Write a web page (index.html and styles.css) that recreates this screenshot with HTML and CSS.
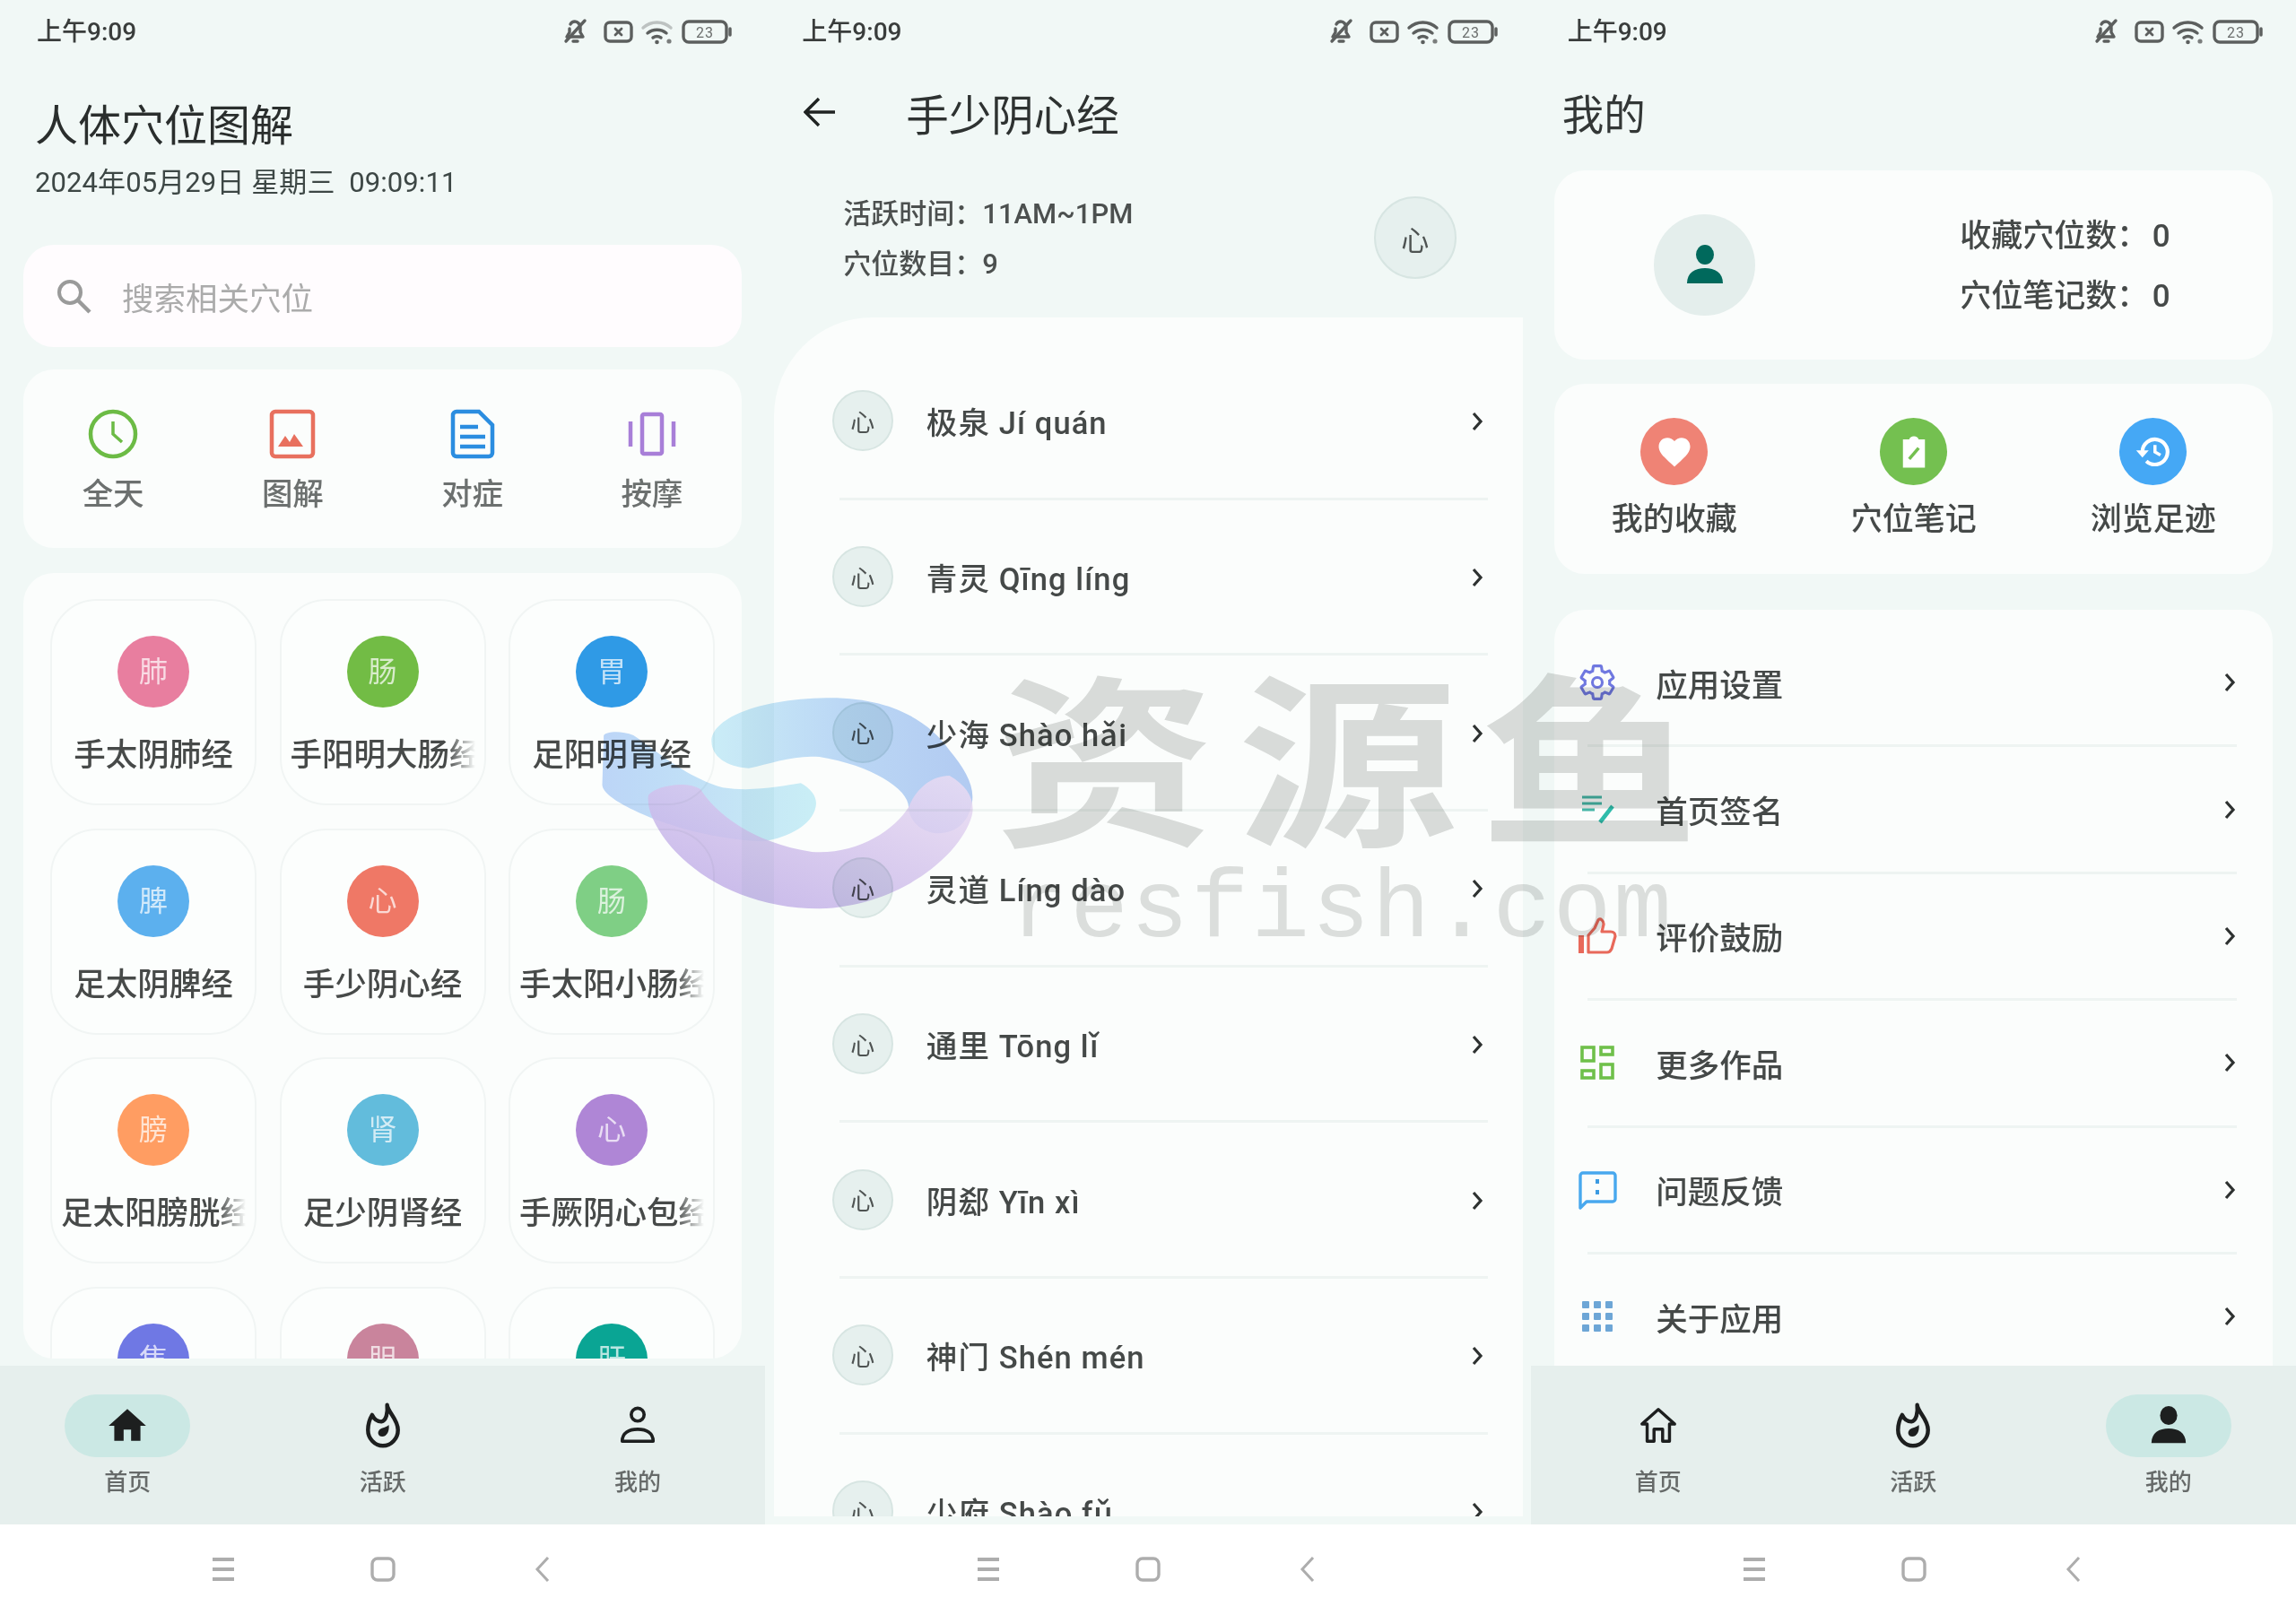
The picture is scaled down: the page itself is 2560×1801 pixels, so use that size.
FILE: index.html
```html
<!DOCTYPE html>
<html lang="zh-CN">
<head>
<meta charset="utf-8">
<title>人体穴位图解</title>
<link rel="stylesheet" href="styles.css">
</head>
<body>
<svg class="defs" aria-hidden="true">
  <symbol id="status-icons" viewBox="0 0 188 30">
    <g fill="none" stroke="#5c5f5e" stroke-width="3.4" stroke-linecap="round" stroke-linejoin="round">
      <path d="M5 21h17l-3-5v-5c0-4-3-7-6-7-2 0-4 1-5 3M7 12v4l-3 5M11 26h5"/>
      <path d="M3 26 24 3"/>
      <rect x="47" y="5" width="29" height="21" rx="5"/>
      <path d="M58 12l7 7M65 12l-7 7" stroke-width="2.8"/>
      <path class="wifi-arc" d="M89 11c9-8 22-8 31 0"/>
      <path d="M94 17c6-5 15-5 21 0M100 22c3-2 6-2 9 0"/>
      <rect x="134" y="4" width="48" height="23" rx="6"/>
      <path d="M186 12v7"/>
    </g>
    <circle cx="104.500" cy="27" r="2.300" fill="#5c5f5e"/>
    <circle cx="118" cy="26" r="2.600" fill="#7a7d7c"/>
    <text x="158" y="22" class="batt-text">23</text>
  </symbol>
  <symbol id="home-filled" viewBox="0 0 24 24"><path d="M10 20v-6h4v6h5v-8h3L12 3 2 12h3v8z"/></symbol>
  <symbol id="home-line" viewBox="0 0 48 48"><path d="M11 42V22H5L24 5l19 17h-6v20h-8V28H19v14z" fill="none" stroke="#1d1f1f" stroke-width="3.600" stroke-linejoin="round"/></symbol>
  <symbol id="flame" viewBox="0 0 48 56">
    <path d="M29 3c1 9 13 17 13 30 0 10-8 19-18 19S6 43 6 33c0-7 2-13 5-18 3 6 7 8 11 8 6-1 8-11 7-20z" fill="none" stroke="#1d1f1f" stroke-width="4.800" stroke-linejoin="round"/>
    <path d="M31 27c1 7-2 14-8 14-4 0-6-4-4-7 2-4 8-3 12-7z" fill="#1d1f1f"/>
  </symbol>
  <symbol id="person-line" viewBox="0 0 48 48">
    <circle cx="24" cy="11" r="7.500" fill="none" stroke="#1d1f1f" stroke-width="3.800"/>
    <path d="M6 42c0-10 8-14 18-14s18 4 18 14z" fill="none" stroke="#1d1f1f" stroke-width="3.800" stroke-linejoin="round"/>
  </symbol>
  <symbol id="person-filled" viewBox="0 0 48 48">
    <ellipse cx="24" cy="12" rx="10" ry="11"/>
    <path d="M4 44c0-12 9-17 20-17s20 5 20 17z"/>
  </symbol>
  <symbol id="sys-menu" viewBox="0 0 26 28"><path d="M1 3h24M1 14h24M1 25h24" stroke="#adadad" stroke-width="4" fill="none"/></symbol>
  <symbol id="sys-home" viewBox="0 0 28 28"><rect x="2" y="2" width="24" height="24" rx="6" fill="none" stroke="#adadad" stroke-width="3.400"/></symbol>
  <symbol id="sys-back" viewBox="0 0 28 28"><path d="M20 1 8 14l12 13" fill="none" stroke="#adadad" stroke-width="3"/></symbol>
  <symbol id="chevron" viewBox="0 0 16 24"><path d="M4 3l8 9-8 9" fill="none" stroke="#2e3231" stroke-width="3.200"/></symbol>
</svg>

<div class="screen">
  <section class="panel panel-home">
    <header class="status"><span class="status-time">上午9:09</span><svg class="status-icons"><use href="#status-icons"/></svg></header>
    <div class="body">
      <h1 class="home-title">人体穴位图解</h1>
      <p class="home-date">2024年05月29日 星期三  09:09:11</p>
      <div class="search">
        <svg class="search-icon" viewBox="0 0 40 40"><circle cx="16" cy="16" r="12" fill="none" stroke="#9a9a9a" stroke-width="4"/><path d="M25 25l13 13" stroke="#9a9a9a" stroke-width="4.500"/></svg>
        <span class="search-text">搜索相关穴位</span>
      </div>
      <div class="card quick">
        <div class="quick-item">
          <svg class="quick-icon" viewBox="0 0 56 56"><circle cx="28" cy="28" r="25" fill="none" stroke="#6cbb45" stroke-width="4.500"/><path d="M28 14v14l10 9" fill="none" stroke="#6cbb45" stroke-width="3.500"/></svg>
          <span>全天</span>
        </div>
        <div class="quick-item">
          <svg class="quick-icon" viewBox="0 0 56 56"><rect x="5" y="3" width="46" height="50" rx="4" fill="none" stroke="#e8705e" stroke-width="4.500"/><path d="M12 42l8-12 5 7 5-9 10 14z" fill="#e8705e"/></svg>
          <span>图解</span>
        </div>
        <div class="quick-item">
          <svg class="quick-icon" viewBox="0 0 56 56"><path d="M6 7a4 4 0 0 1 4-4h25l15 15v31a4 4 0 0 1-4 4H10a4 4 0 0 1-4-4z" fill="none" stroke="#2b8de0" stroke-width="4.500"/><path d="M14 20h20M14 31h28M14 42h28" stroke="#2b8de0" stroke-width="4.500"/></svg>
          <span>对症</span>
        </div>
        <div class="quick-item">
          <svg class="quick-icon" viewBox="0 0 56 56"><rect x="17" y="6" width="22" height="44" rx="2" fill="none" stroke="#a87fd8" stroke-width="4.500"/><path d="M4 14v28M52 14v28" stroke="#a87fd8" stroke-width="4.500"/></svg>
          <span>按摩</span>
        </div>
      </div>
      <div class="card meridians">
        <div class="cell"><span class="dot dot-lung">肺</span><span class="cell-name">手太阴肺经</span></div>
        <div class="cell"><span class="dot dot-li">肠</span><span class="cell-name fade">手阳明大肠经</span></div>
        <div class="cell"><span class="dot dot-st">胃</span><span class="cell-name">足阳明胃经</span></div>
        <div class="cell"><span class="dot dot-sp">脾</span><span class="cell-name">足太阴脾经</span></div>
        <div class="cell"><span class="dot dot-ht">心</span><span class="cell-name">手少阴心经</span></div>
        <div class="cell"><span class="dot dot-si">肠</span><span class="cell-name fade">手太阳小肠经</span></div>
        <div class="cell"><span class="dot dot-bl">膀</span><span class="cell-name fade">足太阳膀胱经</span></div>
        <div class="cell"><span class="dot dot-ki">肾</span><span class="cell-name">足少阴肾经</span></div>
        <div class="cell"><span class="dot dot-pc">心</span><span class="cell-name fade">手厥阴心包经</span></div>
        <div class="cell"><span class="dot dot-te">焦</span><span class="cell-name fade">手少阳三焦经</span></div>
        <div class="cell"><span class="dot dot-gb">胆</span><span class="cell-name">足少阳胆经</span></div>
        <div class="cell"><span class="dot dot-lr">肝</span><span class="cell-name">足厥阴肝经</span></div>
      </div>
    </div>
    <nav class="tabs">
      <div class="tab"><span class="tab-pill on"><svg class="tab-icon tab-home"><use href="#home-filled"/></svg></span><span class="tab-label">首页</span></div>
      <div class="tab"><span class="tab-pill"><svg class="tab-icon"><use href="#flame"/></svg></span><span class="tab-label">活跃</span></div>
      <div class="tab"><span class="tab-pill"><svg class="tab-icon"><use href="#person-line"/></svg></span><span class="tab-label">我的</span></div>
    </nav>
    <footer class="sysbar"><svg class="sys"><use href="#sys-menu"/></svg><svg class="sys"><use href="#sys-home"/></svg><svg class="sys"><use href="#sys-back"/></svg></footer>
  </section>

  <section class="panel panel-detail">
    <header class="status"><span class="status-time">上午9:09</span><svg class="status-icons"><use href="#status-icons"/></svg></header>
    <div class="body">
      <div class="detail-head">
        <svg class="back" viewBox="0 0 36 36"><path d="M35 18H3M17 3 2 18l15 15" fill="none" stroke="#1f2322" stroke-width="3.400"/></svg>
        <h1 class="detail-title">手少阴心经</h1>
      </div>
      <div class="detail-info">
        <div class="info-lines"><p>活跃时间：11AM~1PM</p><p>穴位数目：9</p></div>
        <span class="badge badge-lg">心</span>
      </div>
      <div class="points">
        <div class="point"><span class="badge">心</span><span class="point-name">极泉 Jí quán</span><svg class="chev"><use href="#chevron"/></svg></div>
        <div class="sep-point"></div>
        <div class="point"><span class="badge">心</span><span class="point-name">青灵 Qīng líng</span><svg class="chev"><use href="#chevron"/></svg></div>
        <div class="sep-point"></div>
        <div class="point"><span class="badge">心</span><span class="point-name">少海 Shào hǎi</span><svg class="chev"><use href="#chevron"/></svg></div>
        <div class="sep-point"></div>
        <div class="point"><span class="badge">心</span><span class="point-name">灵道 Líng dào</span><svg class="chev"><use href="#chevron"/></svg></div>
        <div class="sep-point"></div>
        <div class="point"><span class="badge">心</span><span class="point-name">通里 Tōng lǐ</span><svg class="chev"><use href="#chevron"/></svg></div>
        <div class="sep-point"></div>
        <div class="point"><span class="badge">心</span><span class="point-name">阴郄 Yīn xì</span><svg class="chev"><use href="#chevron"/></svg></div>
        <div class="sep-point"></div>
        <div class="point"><span class="badge">心</span><span class="point-name">神门 Shén mén</span><svg class="chev"><use href="#chevron"/></svg></div>
        <div class="sep-point"></div>
        <div class="point"><span class="badge">心</span><span class="point-name">少府 Shào fǔ</span><svg class="chev"><use href="#chevron"/></svg></div>
      </div>
    </div>
    <footer class="sysbar"><svg class="sys"><use href="#sys-menu"/></svg><svg class="sys"><use href="#sys-home"/></svg><svg class="sys"><use href="#sys-back"/></svg></footer>
  </section>

  <section class="panel panel-me">
    <header class="status"><span class="status-time">上午9:09</span><svg class="status-icons"><use href="#status-icons"/></svg></header>
    <div class="body">
      <h1 class="me-title">我的</h1>
      <div class="card profile">
        <span class="avatar"><svg class="avatar-icon"><use href="#person-filled"/></svg></span>
        <div class="stats"><p>收藏穴位数： 0</p><p>穴位笔记数： 0</p></div>
      </div>
      <div class="card shortcuts">
        <div class="shortcut">
          <span class="round round-red"><svg viewBox="0 0 24 24" class="round-icon"><path fill="#fff" d="M12 21.400 10.500 20C5.400 15.400 2 12.300 2 8.500 2 5.400 4.400 3 7.500 3c1.700 0 3.400.8 4.500 2.100C13.100 3.800 14.800 3 16.500 3 19.600 3 22 5.400 22 8.500c0 3.800-3.400 6.900-8.500 11.500z"/></svg></span>
          <span class="shortcut-label">我的收藏</span>
        </div>
        <div class="shortcut">
          <span class="round round-green"><svg viewBox="0 0 24 24" class="round-icon"><path fill="#fff" d="M5 4h4c.3-1.200 1.500-2 3-2s2.700.8 3 2h4v18H5z"/><path d="M9 16.500l6-7" stroke="#74c050" stroke-width="2"/></svg></span>
          <span class="shortcut-label">穴位笔记</span>
        </div>
        <div class="shortcut">
          <span class="round round-blue"><svg viewBox="0 0 24 24" class="round-icon"><path fill="none" stroke="#fff" stroke-width="2.400" d="M5 12a8 8 0 1 1 2.500 5.800"/><path fill="#fff" d="M1 11l4 4.500L9 11z"/><path fill="none" stroke="#fff" stroke-width="2" d="M13 7.500V12l3.500 2"/></svg></span>
          <span class="shortcut-label">浏览足迹</span>
        </div>
      </div>
      <div class="card settings">
        <div class="setting">
          <svg class="setting-icon" viewBox="0 0 24 24"><path fill="none" stroke="#6f78e0" stroke-width="1.700" d="M19.430 12.980c.04-.32.07-.64.07-.98s-.03-.66-.07-.98l2.110-1.650c.19-.15.24-.42.12-.64l-2-3.460c-.12-.22-.39-.3-.61-.22l-2.490 1c-.52-.4-1.080-.73-1.690-.98l-.38-2.650C14.460 2.180 14.250 2 14 2h-4c-.25 0-.46.18-.49.42l-.38 2.650c-.61.25-1.170.59-1.690.98l-2.490-1c-.23-.09-.49 0-.61.22l-2 3.460c-.13.22-.07.49.12.64l2.110 1.650c-.04.32-.07.65-.07.98s.03.66.07.98l-2.110 1.650c-.19.15-.24.42-.12.64l2 3.460c.12.22.39.3.61.22l2.490-1c.52.4 1.080.73 1.690.98l.38 2.650c.03.24.24.42.49.42h4c.25 0 .46-.18.49-.42l.38-2.650c.61-.25 1.170-.59 1.690-.98l2.490 1c.23.09.49 0 .61-.22l2-3.460c.12-.22.07-.49-.12-.64l-2.110-1.650z"/><circle cx="12" cy="12" r="3" fill="none" stroke="#6f78e0" stroke-width="1.700"/></svg>
          <span class="setting-name">应用设置</span><svg class="chev"><use href="#chevron"/></svg>
        </div>
        <div class="sep-setting"></div>
        <div class="setting">
          <svg class="setting-icon" viewBox="0 0 44 44"><path d="M5 8h22M5 15h22M5 22h14" stroke="#45b5a6" stroke-width="3"/><path d="M39 18 25 36" stroke="#2fbcab" stroke-width="4.500"/></svg>
          <span class="setting-name">首页签名</span><svg class="chev"><use href="#chevron"/></svg>
        </div>
        <div class="sep-setting"></div>
        <div class="setting">
          <svg class="setting-icon" viewBox="0 0 44 44"><path d="M1 21h6v20H1z" fill="#e8695a"/><path d="M12 40h21c2 0 4-2 5-4l4-14c0-3-2-5-5-5H27l2-8c.5-4-4-8-6-5l-4 9-7 8z" fill="none" stroke="#e8695a" stroke-width="3.200" stroke-linejoin="round"/></svg>
          <span class="setting-name">评价鼓励</span><svg class="chev"><use href="#chevron"/></svg>
        </div>
        <div class="sep-setting"></div>
        <div class="setting">
          <svg class="setting-icon" viewBox="0 0 44 44"><g fill="none" stroke="#6fc04a" stroke-width="3.600"><rect x="5" y="5" width="13" height="15"/><rect x="26" y="5" width="13" height="8"/><rect x="5" y="31" width="13" height="8"/><rect x="26" y="24" width="13" height="15"/></g></svg>
          <span class="setting-name">更多作品</span><svg class="chev"><use href="#chevron"/></svg>
        </div>
        <div class="sep-setting"></div>
        <div class="setting">
          <svg class="setting-icon" viewBox="0 0 44 44"><path d="M3 6a3 3 0 0 1 3-3h33a3 3 0 0 1 3 3v26a3 3 0 0 1-3 3H10l-7 7z" fill="none" stroke="#48a8ee" stroke-width="3.400" stroke-linejoin="round"/><path d="M22 10v5M22 22v5" stroke="#3c9be2" stroke-width="4"/></svg>
          <span class="setting-name">问题反馈</span><svg class="chev"><use href="#chevron"/></svg>
        </div>
        <div class="sep-setting"></div>
        <div class="setting">
          <svg class="setting-icon" viewBox="0 0 44 44"><g fill="#6da6d6"><rect x="5" y="5" width="8" height="8" rx="1"/><rect x="18" y="5" width="8" height="8" rx="1"/><rect x="31" y="5" width="8" height="8" rx="1"/><rect x="5" y="18" width="8" height="8" rx="1"/><rect x="18" y="18" width="8" height="8" rx="1"/><rect x="31" y="18" width="8" height="8" rx="1"/><rect x="5" y="31" width="8" height="8" rx="1"/><rect x="18" y="31" width="8" height="8" rx="1"/><rect x="31" y="31" width="8" height="8" rx="1"/></g></svg>
          <span class="setting-name">关于应用</span><svg class="chev"><use href="#chevron"/></svg>
        </div>
      </div>
    </div>
    <nav class="tabs">
      <div class="tab"><span class="tab-pill"><svg class="tab-icon"><use href="#home-line"/></svg></span><span class="tab-label">首页</span></div>
      <div class="tab"><span class="tab-pill"><svg class="tab-icon"><use href="#flame"/></svg></span><span class="tab-label">活跃</span></div>
      <div class="tab"><span class="tab-pill on"><svg class="tab-icon"><use href="#person-filled"/></svg></span><span class="tab-label">我的</span></div>
    </nav>
    <footer class="sysbar"><svg class="sys"><use href="#sys-menu"/></svg><svg class="sys"><use href="#sys-home"/></svg><svg class="sys"><use href="#sys-back"/></svg></footer>
  </section>

  <svg class="wm-logo" viewBox="0 0 1568 1080" preserveAspectRatio="none" aria-hidden="true">
    <defs>
      <linearGradient id="wm-a" x1="0" x2="1" y1="0" y2="0"><stop offset="0" stop-color="#c5ecf9"/><stop offset="0.5" stop-color="#b3d3f7"/><stop offset="1" stop-color="#a8c4f3"/></linearGradient>
      <linearGradient id="wm-b" x1="0" x2="1" y1="0" y2="0"><stop offset="0" stop-color="#b3cff8"/><stop offset="1" stop-color="#c4eef8"/></linearGradient>
      <linearGradient id="wm-c" x1="0" x2="1" y1="1" y2="0"><stop offset="0" stop-color="#bda9e8"/><stop offset="1" stop-color="#efdff6"/></linearGradient>
    </defs>
    <path class="wm-shape" fill="url(#wm-b)" d="M40 300C45 285 65 285 80 300C110 350 150 440 200 475C240 490 280 470 305 460C320 480 328 510 325 540C320 600 290 640 255 655C190 650 120 600 80 550C55 520 38 490 38 465Z"/>
    <path class="wm-shape" fill="url(#wm-a)" d="M235 410C205 405 185 370 185 320C185 250 240 180 340 175C430 172 480 260 505 350C525 410 540 470 535 530C530 590 515 625 490 628C465 625 450 580 450 540C450 480 400 400 330 372C295 365 265 395 235 410Z"/>
    <path class="wm-shape" fill="url(#wm-c)" d="M100 500C110 470 150 450 170 480C190 560 240 660 320 690C380 700 430 620 450 540C460 480 480 435 505 435C530 470 540 520 535 570C520 700 440 870 330 880C230 880 150 760 115 620C105 580 98 540 100 500Z"/>
  </svg>
  <div class="wm-cn">资源鱼</div>
  <div class="wm-en">resfish.com</div>
</div>
</body>
</html>
```

FILE: styles.css
```css
* { box-sizing: border-box; }
html, body { margin: 0; padding: 0; background: #fff; }
body { font-family: Roboto, "Noto Sans CJK SC", sans-serif; color: #3a3d3c; }
h1, p { margin: 0; font-weight: 400; }
.defs { display: none; }
.batt-text { font: 400 16px Roboto, sans-serif; fill: #6a6d6c; text-anchor: middle; letter-spacing: 1px; }

.screen { position: relative; display: flex; width: 2560px; height: 1801px; overflow: hidden; filter: blur(0.6px); }
.panel { display: flex; flex-direction: column; flex: 0 0 33.3334%; height: 100%; background: #f1f8f6; }
.panel-home { --arc: 0.35; }
.wifi-arc { stroke-opacity: var(--arc, 1); }
.body { flex: 1; min-height: 0; overflow: hidden; }

.status { flex: 0 0 70px; display: flex; align-items: center; justify-content: space-between; padding: 2px 37px 0 41px; }
.status-time { font-size: 28px; font-weight: 500; color: #3a3d3c; line-height: 40px; }
.status-icons { width: 188px; height: 30px; margin-top: -2px; }

.card { background: #fbfdfc; border-radius: 34px; width: 801px; margin-left: 26px; }

.home-title { margin: 41px 0 0 39px; font-size: 48px; line-height: 60px; color: #2a2e2d; }
.home-date { margin: 13px 0 0 39px; font-size: 31px; line-height: 40px; letter-spacing: 0.1px; color: #3d4745; white-space: pre; }
.search { display: flex; align-items: center; width: 801px; height: 114px; margin: 49px 0 0 26px; padding-left: 36px; background: #fffcfe; border-radius: 34px; }
.search-icon { width: 40px; height: 40px; }
.search-text { margin-left: 34px; font-size: 35.500px; color: #ababab; }

.quick { display: grid; grid-template-columns: repeat(4, 1fr); height: 199px; margin-top: 25px; padding-top: 44px; }
.quick-item { display: flex; flex-direction: column; align-items: center; font-size: 34.500px; font-weight: 500; line-height: 46px; color: #6c706f; }
.quick-icon { width: 56px; height: 56px; margin-bottom: 16px; }

.meridians { display: grid; grid-template-columns: repeat(3, 230px); grid-auto-rows: 230px; column-gap: 25.500px; row-gap: 25.500px; height: 876px; margin-top: 28px; padding: 29px 0 0 30px; overflow: hidden; }
.cell { display: flex; flex-direction: column; align-items: center; padding-top: 39px; background: #fcfefd; border: 2px solid #f1f5f4; border-radius: 52px; }
.dot { display: flex; align-items: center; justify-content: center; width: 80px; height: 80px; border-radius: 50%; font-size: 32px; line-height: 1; color: rgba(255, 255, 255, 0.72); }
.dot-lung { background: #e87e9f; }
.dot-li { background: #72bc45; }
.dot-st { background: #2f9ae6; }
.dot-sp { background: #5cb0ee; }
.dot-ht { background: #ef7866; }
.dot-si { background: #7fcf85; }
.dot-bl { background: #ff9d62; }
.dot-ki { background: #62bcdc; }
.dot-pc { background: #af86d6; }
.dot-te { background: #6f78e4; }
.dot-gb { background: #c9849c; }
.dot-lr { background: #0aa594; }
.cell-name { width: 206px; margin-top: 30px; font-size: 35.500px; font-weight: 500; line-height: 46px; color: #474a49; text-align: center; white-space: nowrap; overflow: hidden; }
.fade { -webkit-mask-image: linear-gradient(to right, #000 85%, transparent 100%); mask-image: linear-gradient(to right, #000 85%, transparent 100%); }

.tabs { flex: 0 0 177px; display: grid; grid-template-columns: repeat(3, 1fr); background: #e6efed; }
.tab { display: flex; flex-direction: column; align-items: center; padding-top: 32px; }
.tab-pill { display: flex; align-items: center; justify-content: center; width: 140px; height: 70px; border-radius: 35px; }
.tab-pill.on { background: #cbe8e4; }
.tab-icon { width: 46px; height: 52px; fill: #1d1f1f; }
.tab-home { width: 50px; height: 50px; }
.tab-label { margin-top: 10px; font-size: 26px; font-weight: 500; line-height: 36px; color: #666a69; }

.sysbar { flex: 0 0 101px; display: flex; align-items: center; justify-content: center; gap: 150px; padding: 0 0 2px 1px; background: #fff; }
.sys { width: 28px; height: 28px; }

.detail-head { display: flex; align-items: center; height: 60px; margin-top: 30px; padding-left: 43px; }
.back { width: 36px; height: 36px; margin-top: -10px; }
.detail-title { margin-left: 78px; font-size: 47.500px; line-height: 60px; color: #2e3231; }
.detail-info { display: flex; align-items: center; justify-content: space-between; margin: 51px 83px 0 87px; height: 112px; }
.info-lines p { font-size: 31px; font-weight: 500; line-height: 56px; color: #4c504f; }
.badge { flex: none; display: flex; align-items: center; justify-content: center; width: 68px; height: 68px; border: 2px solid #d7e5e2; border-radius: 50%; background: #e6f0ee; font-size: 27px; color: #4e5352; }
.badge-lg { width: 92px; height: 92px; margin-top: -4px; font-size: 31px; }
.points { height: 1337px; margin: 31px 9px 0 9.500px; padding-top: 30px; background: #fbfdfc; border-top-left-radius: 110px; overflow: hidden; }
.point { display: flex; align-items: center; height: 170.700px; padding: 0 43px 0 65px; }
.point-name { flex: 1; margin-left: 37px; font-size: 34.500px; font-weight: 500; letter-spacing: 1.100px; color: #454948; }
.chev { flex: none; width: 16px; height: 24px; }
.point .chev { margin-top: 2px; }
.sep-point { height: 3px; margin: 0 39px 0 73px; background: #eef4f2; }

.me-title { margin: 29px 0 0 35px; font-size: 46.500px; line-height: 60px; color: #333736; }
.panel-me .card { margin-left: 26.500px; }
.profile { display: flex; align-items: center; height: 211px; margin-top: 31px; padding-left: 111px; }
.avatar { display: flex; align-items: center; justify-content: center; width: 113px; height: 113px; border-radius: 50%; background: #e4eeec; }
.avatar-icon { width: 48px; height: 48px; fill: #00695c; }
.stats { margin: 2px 0 0 228px; }
.stats p { font-size: 35px; font-weight: 500; line-height: 67px; word-spacing: -4px; color: #454948; white-space: nowrap; }
.shortcuts { display: grid; grid-template-columns: repeat(3, 1fr); height: 212px; margin-top: 27px; padding-top: 38px; }
.shortcut { display: flex; flex-direction: column; align-items: center; }
.round { display: flex; align-items: center; justify-content: center; width: 75px; height: 75px; border-radius: 50%; }
.round-red { background: #ef8375; }
.round-green { background: #74c050; }
.round-blue { background: #45a8f5; }
.round-icon { width: 42px; height: 42px; }
.shortcut-label { margin-top: 16px; font-size: 35px; font-weight: 500; line-height: 46px; color: #454948; }
.settings { height: 900px; margin-top: 40px; padding-top: 12px; border-radius: 34px 34px 0 0; }
.setting { display: flex; align-items: center; height: 138.400px; padding: 0 40px 0 26px; }
.setting-icon { flex: none; width: 44px; height: 44px; }
.setting-name { flex: 1; margin-left: 43px; font-size: 35.500px; font-weight: 500; color: #454948; }
.sep-setting { height: 3px; margin: 0 40px 0 37px; background: #eef4f2; }

.wm-logo { position: absolute; left: 640px; top: 720px; width: 1300px; height: 360px; mix-blend-mode: multiply; pointer-events: none; }
.wm-shape { opacity: 0.85; }
.wm-cn { position: absolute; left: 1110px; top: 725px; font-family: "Noto Sans CJK SC", sans-serif; font-size: 245px; font-weight: 700; line-height: 270px; letter-spacing: 25px; color: #dcdddc; mix-blend-mode: multiply; white-space: nowrap; transform: scaleY(0.84); transform-origin: top left; pointer-events: none; }
.wm-en { position: absolute; left: 1126px; top: 955px; font-family: "Liberation Mono", monospace; font-size: 108px; line-height: 120px; letter-spacing: 2.500px; color: #dfe0df; mix-blend-mode: multiply; white-space: nowrap; pointer-events: none; }
```
